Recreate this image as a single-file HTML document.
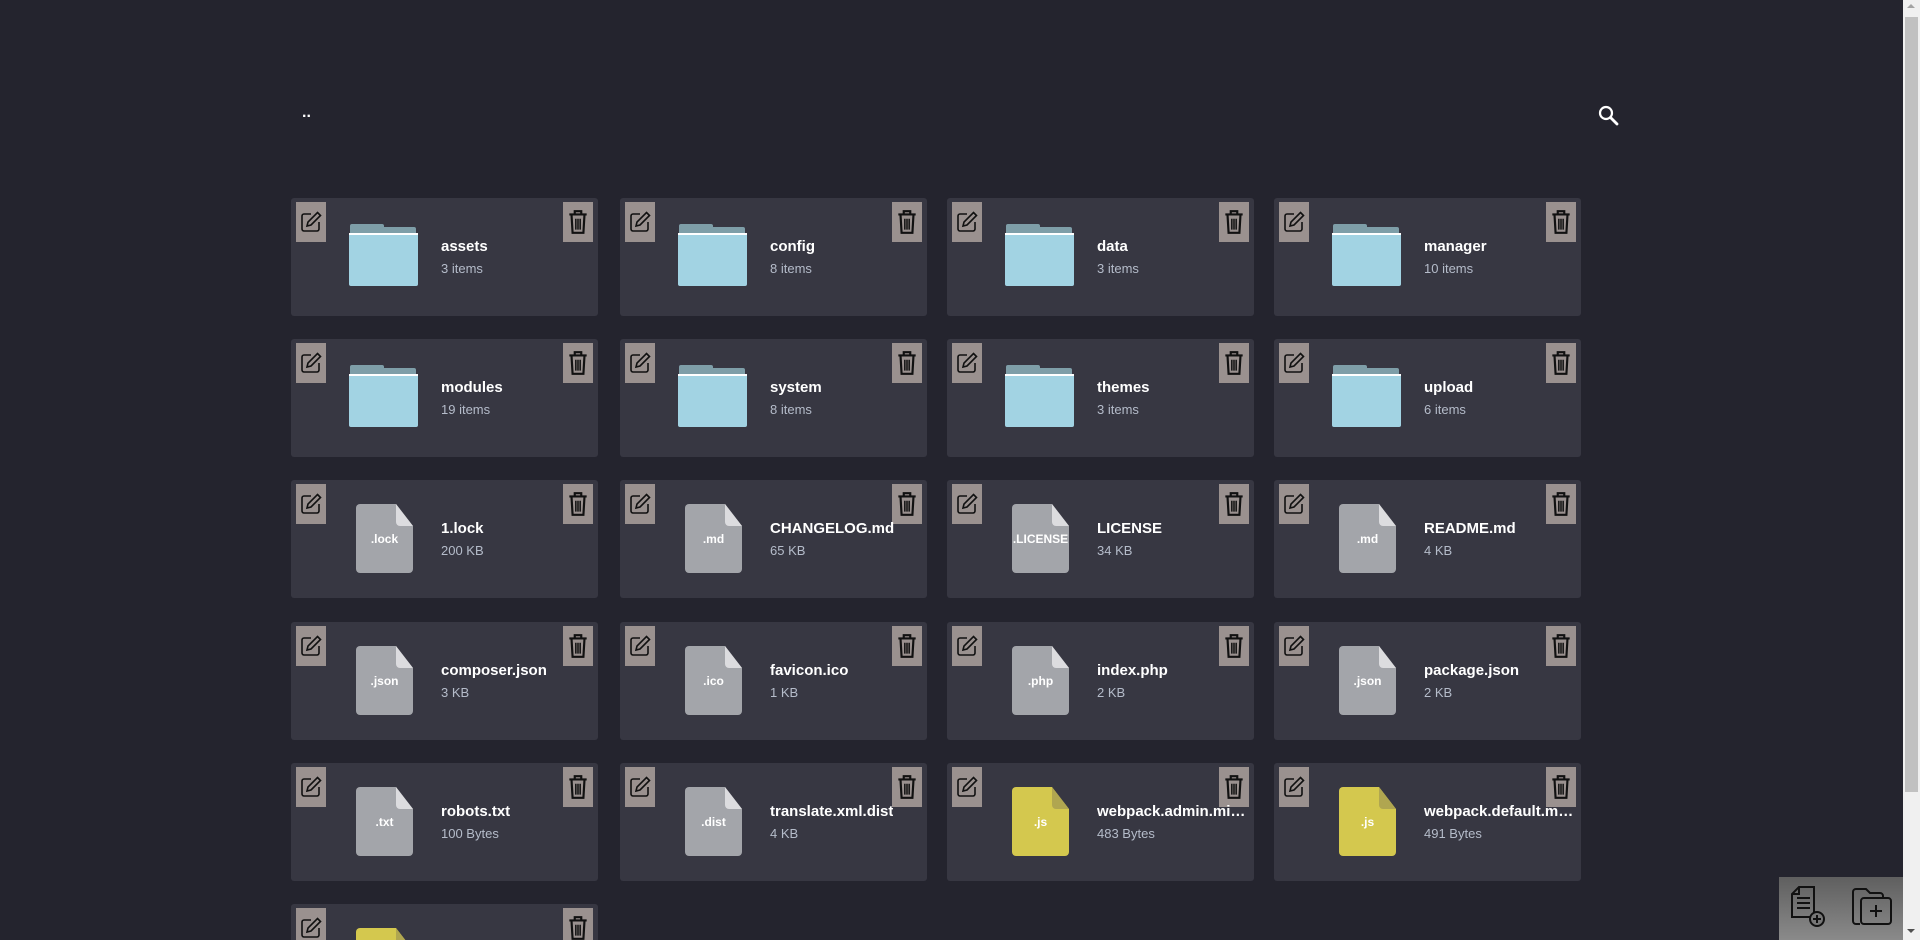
<!DOCTYPE html>
<html><head><meta charset="utf-8"><style>
*{margin:0;padding:0;box-sizing:border-box}
html,body{width:1920px;height:940px;overflow:hidden;background:#24242e;font-family:"Liberation Sans",Arial,sans-serif}
#wrap{position:relative;width:1920px;height:940px;overflow:hidden}
.card{position:absolute;width:307px;height:118px;background:#373742;border-radius:3px}
.btn{position:absolute;top:4px;width:30px;height:40px;background:#9a918f;display:flex;align-items:center;justify-content:center}
.ed{left:5px}.dl{right:5px}
.name{position:absolute;left:150px;top:40px;color:#fff;font-weight:bold;font-size:15px;white-space:nowrap;overflow:hidden;text-overflow:ellipsis;max-width:150px}
.sub{position:absolute;left:150px;top:63px;color:#b5bcca;font-size:13px}
.fold{position:absolute;left:58px;top:26px;width:69px;height:62px}
.file{position:absolute;left:65px;top:24px;width:57px;height:69px}
.file .t{position:absolute;left:0;right:0;top:28px;text-align:center;color:#fff;font-size:12px;font-weight:bold;white-space:nowrap;overflow:hidden}
</style></head><body><div id="wrap">
<div style="position:absolute;left:302px;top:104px;color:#fff;font-weight:bold;font-size:16px">..</div>
<svg style="position:absolute;left:1596px;top:103px" width="26" height="26" viewBox="0 0 26 26"><circle cx="10" cy="10" r="6" fill="none" stroke="#fff" stroke-width="2.2"/><path d="M14.5 14.5 L21 21" stroke="#fff" stroke-width="2.8" stroke-linecap="round"/></svg>
<div id="g"></div>
<div style="position:absolute;left:1903px;top:0;width:17px;height:940px;background:#f0f0f0"><div style="position:absolute;left:4px;top:4px;width:0;height:0;border-left:4px solid transparent;border-right:4px solid transparent;border-bottom:4px solid #a3a3a3"></div><div style="position:absolute;left:2px;top:17px;width:13px;height:775px;background:#c1c1c1"></div><div style="position:absolute;left:4px;top:929px;width:0;height:0;border-left:4px solid transparent;border-right:4px solid transparent;border-top:4px solid #505050"></div></div>
<div style="position:absolute;left:1779px;top:877px;width:124px;height:63px;background:linear-gradient(#5f5f5f,#8a8a8a)">
<svg style="position:absolute;left:12px;top:9px" width="36" height="46" viewBox="0 0 36 46"><path d="M8 1H23V31H1V8Z" fill="none" stroke="#111" stroke-width="2"/><path d="M1 8H8V1" fill="none" stroke="#111" stroke-width="2"/><path d="M6 12H19M6 17H19M6 22H19" stroke="#111" stroke-width="2"/><circle cx="26" cy="33" r="7" fill="#777" stroke="#111" stroke-width="2"/><path d="M22 33H30M26 29V37" stroke="#111" stroke-width="2"/></svg>
<svg style="position:absolute;left:72px;top:9px" width="42" height="40" viewBox="0 0 42 40"><path d="M2 6a3 3 0 0 1 3-3h10l4 4h10a3 3 0 0 1 3 3v2" fill="none" stroke="#111" stroke-width="2"/><path d="M2 6V35a3 3 0 0 0 3 3h4" fill="none" stroke="#111" stroke-width="2"/><rect x="10" y="12" width="30" height="26" rx="3" fill="none" stroke="#111" stroke-width="2"/><path d="M19 25H31M25 19V31" stroke="#111" stroke-width="2"/></svg>
</div>
</div>
<script>
const items=[["assets","3 items","d"],["config","8 items","d"],["data","3 items","d"],["manager","10 items","d"],
["modules","19 items","d"],["system","8 items","d"],["themes","3 items","d"],["upload","6 items","d"],
["1.lock","200 KB",".lock"],["CHANGELOG.md","65 KB",".md"],["LICENSE","34 KB",".LICENSE"],["README.md","4 KB",".md"],
["composer.json","3 KB",".json"],["favicon.ico","1 KB",".ico"],["index.php","2 KB",".php"],["package.json","2 KB",".json"],
["robots.txt","100 Bytes",".txt"],["translate.xml.dist","4 KB",".dist"],["webpack.admin.mix.js","483 Bytes",".js"],["webpack.default.mix.js","491 Bytes",".js"],
["yarn.lock","",".js"]];
const cols=[291,620,947,1274],rows=[198,339,480,622,763,904];
const ed='<svg width="24" height="24" viewBox="0 0 24 24"><path d="M12 4H5a2 2 0 0 0-2 2v13a2 2 0 0 0 2 2h13a2 2 0 0 0 2-2v-7" fill="none" stroke="#111" stroke-width="1.6"/><path d="M18.5 2.5l3 3L12 15l-4 1 1-4z" fill="none" stroke="#111" stroke-width="1.6"/></svg>';
const dl='<svg width="22" height="26" viewBox="0 0 20 24"><path d="M2 5H18M7 5V2H13V5M4 5L5 22H15L16 5" fill="none" stroke="#111" stroke-width="2"/><path d="M8 9V19M10 9V19M12 9V19" stroke="#111" stroke-width="1.4"/></svg>';
const fold='<svg width="69" height="62" viewBox="0 0 69 62"><rect x="1" y="0" width="34" height="10" rx="2" fill="#7e9ea8"/><rect x="1" y="3" width="66" height="10" rx="2" fill="#7e9ea8"/><rect x="0" y="9" width="69" height="53" rx="2" fill="#a2d3e3"/><rect x="0" y="9" width="69" height="2" fill="#fff"/></svg>';
let h='';
items.forEach((it,i)=>{const x=cols[i%4],y=rows[Math.floor(i/4)];
let icon;
if(it[2]=='d')icon='<div class="fold">'+fold+'</div>';
else{const js=it[2]=='.js';const m=js?'#d4c84e':'#a3a5aa',f=js?'#b0a650':'#dcdcdf';
icon='<div class="file"><svg width="57" height="69" viewBox="0 0 57 69" style="position:absolute;left:0;top:0"><path d="M4 0H40L57 22V65a4 4 0 0 1-4 4H4a4 4 0 0 1-4-4V4a4 4 0 0 1 4-4z" fill="'+m+'"/><path d="M40 0L57 22H44a4 4 0 0 1-4-4z" fill="'+f+'"/></svg><div class="t">'+it[2]+'</div></div>';}
h+='<div class="card" style="left:'+x+'px;top:'+y+'px"><div class="btn ed">'+ed+'</div><div class="btn dl">'+dl+'</div>'+icon+'<div class="name">'+it[0]+'</div><div class="sub">'+it[1]+'</div></div>';});
document.getElementById('g').innerHTML=h;
</script>
</body></html>
